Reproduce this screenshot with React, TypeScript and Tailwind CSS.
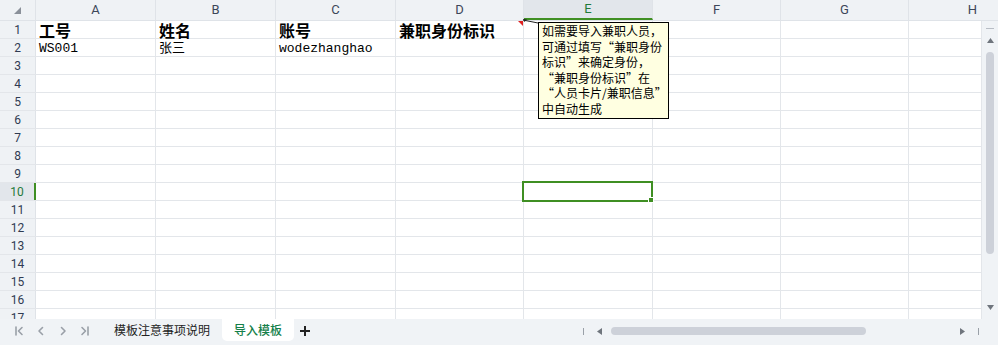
import { Fragment } from 'react'

const cols = ['A', 'B', 'C', 'D', 'E', 'F', 'G', 'H']

const headW = ['w-[120px]', 'w-[120px]', 'w-[120px]', 'w-[128px]', 'w-[129px]', 'w-[128px]', 'w-[128px]', 'w-[128px]']
// body stops at the vertical scrollbar, so column H is cut short there
const bodyW = ['w-[120px]', 'w-[120px]', 'w-[120px]', 'w-[128px]', 'w-[129px]', 'w-[128px]', 'w-[128px]', 'w-[73px]']

const data: Record<number, string[]> = {
  1: ['工号', '姓名', '账号', '兼职身份标识'],
  2: ['WS001', '张三', 'wodezhanghao'],
}

const comment = [
  '如需要导入兼职人员，',
  '可通过填写“兼职身份',
  '标识”来确定身份，',
  '“兼职身份标识”在',
  '“人员卡片/兼职信息”',
  '中自动生成',
]

const rows = Array.from({ length: 17 }, (_, i) => i + 1)

function NavIcon({ kind }: { kind: 'first' | 'prev' | 'next' | 'last' }) {
  return (
    <svg width="12" height="12" viewBox="0 0 12 12" fill="none" stroke="#9aa0a8" strokeWidth="1.6" strokeLinecap="round" strokeLinejoin="round">
      {kind === 'first' && (
        <>
          <path d="M3 2v8" />
          <path d="M9 2.5 5.5 6 9 9.5" />
        </>
      )}
      {kind === 'prev' && <path d="M7.5 2.5 4 6l3.5 3.5" />}
      {kind === 'next' && <path d="M4.5 2.5 8 6l-3.5 3.5" />}
      {kind === 'last' && (
        <>
          <path d="M3 2.5 6.5 6 3 9.5" />
          <path d="M9 2v8" />
        </>
      )}
    </svg>
  )
}

export default function App() {
  return (
    <div className="w-[998px] h-[345px] overflow-hidden bg-white flex flex-col font-['Roboto','Noto_Sans_CJK_SC',sans-serif]">
      {/* Sheet area */}
      <div className="relative h-[319px] flex flex-col overflow-hidden">
        {/* Column headers */}
        <div className="flex h-[21px] shrink-0 bg-[#eff2f5] border-b border-[#dfe3e8]">
          <div className="w-[36px] shrink-0 border-r border-[#dfe3e8] flex items-center justify-center">
            <svg width="7" height="7" viewBox="0 0 7 7">
              <polygon points="0,7 7,7 7,0" fill="#8a9099" />
            </svg>
          </div>
          {cols.map((c, i) =>
            c === 'E' ? (
              <div key={c} className={`${headW[i]} shrink-0 border-r border-[#dfe3e8] bg-[#e2e6eb] border-b-2 border-b-[#3f8f23] flex items-center justify-center text-[13px] text-[#1f7a3a]`}>
                {c}
              </div>
            ) : (
              <div key={c} className={`${headW[i]} shrink-0 border-r border-[#dfe3e8] flex items-center justify-center text-[13px] text-[#3c4659]`}>
                {c}
              </div>
            )
          )}
        </div>

        {/* Body */}
        <div className="flex flex-1 min-h-0">
          <div className="w-[982px]">
            {rows.map(r => (
              <div key={r} className="flex h-[18px] border-b border-[#e3e6ea]">
                {r === 10 ? (
                  <div className="w-[36px] shrink-0 bg-[#e2e6eb] border-r-2 border-[#3f8f23] flex items-center justify-center text-[12px] text-[#1f7a3a]">
                    {r}
                  </div>
                ) : (
                  <div className="w-[36px] shrink-0 bg-[#eff2f5] border-r border-[#dfe3e8] flex items-center justify-center text-[12px] text-[#2f3b52]">
                    {r}
                  </div>
                )}
                {cols.map((c, i) => {
                  const v = data[r]?.[i]
                  return (
                    <div key={c} className={`${bodyW[i]} shrink-0 border-r border-[#e3e6ea] flex items-center pl-[3px] whitespace-nowrap`}>
                      {v && r === 1 && (
                        <span className="text-[16px] leading-[16px] font-bold text-black font-['Noto_Sans_CJK_SC',sans-serif]">{v}</span>
                      )}
                      {v && r === 2 && (
                        <span className="mt-[2px] text-[13px] leading-[15px] text-black font-['Liberation_Mono','Noto_Sans_CJK_SC',monospace]">{v}</span>
                      )}
                    </div>
                  )
                })}
              </div>
            ))}
          </div>

          {/* Vertical scrollbar */}
          <div className="w-[16px] shrink-0 bg-[#f0f3f6] flex flex-col items-center">
            <div className="mt-[7px] w-[8px] h-px bg-[#b8bdc5]" />
            <svg className="mt-[9px]" width="7" height="5" viewBox="0 0 7 5">
              <polygon points="3.5,0 7,5 0,5" fill="#6f757d" />
            </svg>
            <div className="mt-[9px] w-[8px] h-[202px] rounded-full bg-[#cdd1d9]" />
            <svg className="mt-[51px]" width="7" height="5" viewBox="0 0 7 5">
              <polygon points="0,0 7,0 3.5,5" fill="#6f757d" />
            </svg>
          </div>
        </div>

        {/* Comment marker on D1 */}
        <svg className="absolute left-[518px] top-[21px]" width="5" height="5" viewBox="0 0 5 5">
          <polygon points="0,0 5,0 5,5" fill="#e02020" />
        </svg>
        <svg className="absolute left-[522px] top-[19px]" width="18" height="6" viewBox="0 0 18 6">
          <path d="M1 1 16 4" stroke="#222" strokeWidth="1" />
          <polygon points="1,0 5,0.5 2.5,3" fill="#222" />
        </svg>

        {/* Selected cell E10 */}
        <div className="absolute left-[522px] top-[181px] w-[131px] h-[21px] border-2 border-[#3f8f23]">
          <div className="absolute -right-[3px] -bottom-[3px] w-[6px] h-[6px] bg-[#3f8f23] border border-white" />
        </div>

        {/* Comment box */}
        <div className="absolute left-[538px] top-[22px] w-[131px] h-[97px] bg-[#ffffe1] border border-black pl-[3px] font-['Noto_Sans_CJK_SC',sans-serif] text-[12px] leading-[15.5px] text-black">
          {comment.map((line, i) => (
            <Fragment key={i}>
              <div className="whitespace-nowrap">{line}</div>
            </Fragment>
          ))}
        </div>
      </div>

      {/* Sheet tabs */}
      <div className="h-[26px] shrink-0 bg-[#f0f3f6] flex items-start">
        <div className="flex items-center gap-[10px] pl-[13px] h-[24px]">
          <NavIcon kind="first" />
          <NavIcon kind="prev" />
          <NavIcon kind="next" />
          <NavIcon kind="last" />
        </div>
        <div className="ml-[11px] px-[12px] h-[22px] flex items-center text-[12px] text-[#222] font-['Noto_Sans_CJK_SC',sans-serif]">
          模板注意事项说明
        </div>
        <div className="px-[12px] h-[22px] flex items-center bg-white rounded-b-[5px] text-[12px] font-medium text-[#15804a] font-['Noto_Sans_CJK_SC',sans-serif]">
          导入模板
        </div>
        <div className="ml-[5px] h-[24px] flex items-center">
          <svg width="12" height="12" viewBox="0 0 12 12" stroke="#222" strokeWidth="2">
            <path d="M6 1v10M1 6h10" />
          </svg>
        </div>

        {/* Horizontal scrollbar */}
        <div className="ml-auto pr-[19px] h-[24px] flex items-center">
          <div className="w-px h-[7px] bg-[#9aa0a8]" />
          <svg className="ml-[13px]" width="5" height="7" viewBox="0 0 5 7">
            <polygon points="5,0 5,7 0,3.5" fill="#6f757d" />
          </svg>
          <div className="ml-[9px] w-[347px]">
            <div className="w-[255px] h-[8px] rounded-full bg-[#cdd1d9]" />
          </div>
          <svg className="ml-[2px]" width="5" height="7" viewBox="0 0 5 7">
            <polygon points="0,0 5,3.5 0,7" fill="#6f757d" />
          </svg>
          <div className="ml-[13px] w-px h-[7px] bg-[#9aa0a8]" />
        </div>
      </div>
    </div>
  )
}
